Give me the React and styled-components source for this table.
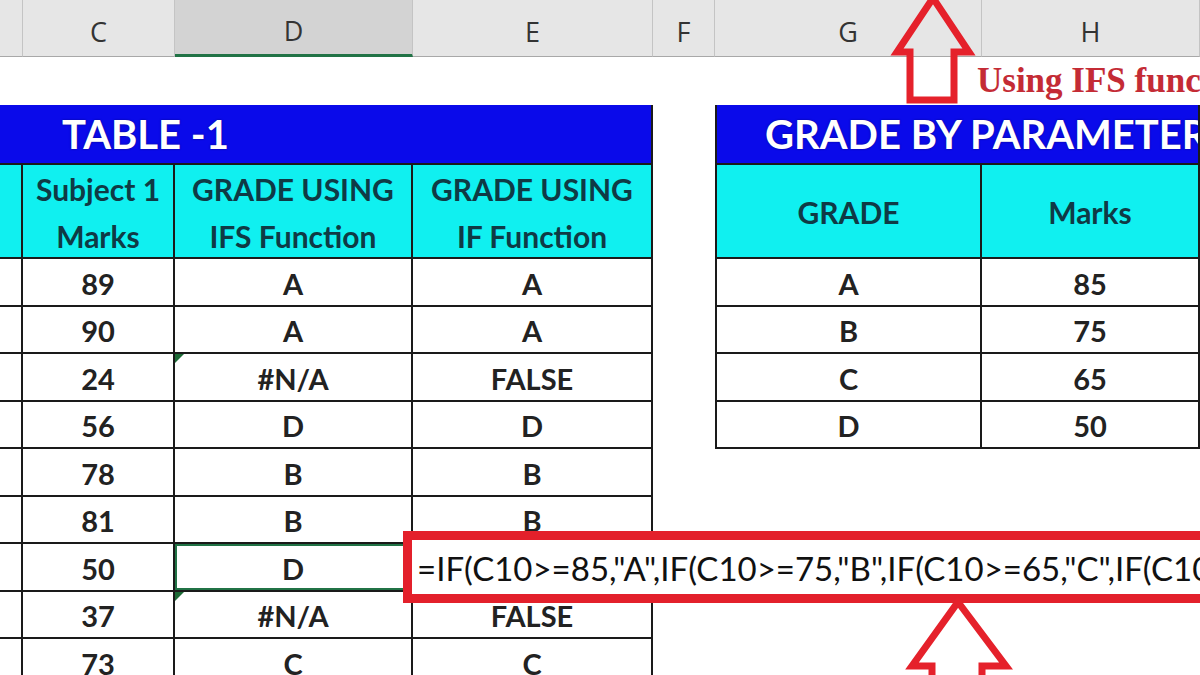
import React from 'react';
import styled, { createGlobalStyle } from 'styled-components';

const GlobalStyle = createGlobalStyle`
  body {
    margin: 0;
    background: #fff;
  }
`;

const marks = [
  { m: 89, ifs: 'A', iff: 'A' },
  { m: 90, ifs: 'A', iff: 'A' },
  { m: 24, ifs: '#N/A', iff: 'FALSE', flag: true },
  { m: 56, ifs: 'D', iff: 'D' },
  { m: 78, ifs: 'B', iff: 'B' },
  { m: 81, ifs: 'B', iff: 'B' },
  { m: 50, ifs: 'D', iff: '', selected: true },
  { m: 37, ifs: '#N/A', iff: 'FALSE', flag: true },
  { m: 73, ifs: 'C', iff: 'C' },
];

const params = [
  ['A', 85],
  ['B', 75],
  ['C', 65],
  ['D', 50],
];

const letters = ['', 'C', 'D', 'E', 'F', 'G', 'H'];

const App = () => {
  return (
    <>
      <GlobalStyle />
      <Sheet>
        {letters.map((l) => (
          <ColHeader key={l || 'b'} $active={l === 'D'}>{l}</ColHeader>
        ))}

        <Table1>
          <Title $pad={62}>TABLE -1</Title>
          <HeadCell />
          <HeadCell>Subject 1<br />Marks</HeadCell>
          <HeadCell>GRADE USING<br />IFS Function</HeadCell>
          <HeadCell>GRADE USING<br />IF Function</HeadCell>
          {marks.map((r, i) => (
            <React.Fragment key={i}>
              <Cell />
              <Cell>{r.m}</Cell>
              <Cell $flag={r.flag} $selected={r.selected}>{r.ifs}</Cell>
              <Cell>{r.iff}</Cell>
            </React.Fragment>
          ))}
        </Table1>

        <Table2>
          <Title $pad={48}>GRADE BY PARAMETERS</Title>
          <HeadCell>GRADE</HeadCell>
          <HeadCell>Marks</HeadCell>
          {params.map(([g, v]) => (
            <React.Fragment key={g}>
              <Cell>{g}</Cell>
              <Cell>{v}</Cell>
            </React.Fragment>
          ))}
        </Table2>

        <Note>Using IFS function</Note>

        <Arrow style={{ left: 890, top: -8 }} width="90" height="115" viewBox="0 0 90 115">
          <polygon points="43,6 79,60 64,60 64,108 20,108 20,60 7,60" />
        </Arrow>

        <FormulaBox>
          <Caret />
          =IF(C10&gt;=85,"A",IF(C10&gt;=75,"B",IF(C10&gt;=65,"C",IF(C10&gt;=50,"D"))))
        </FormulaBox>

        <Arrow style={{ left: 900, top: 592 }} width="120" height="90" viewBox="0 0 120 90">
          <polygon points="58,10 106,74 82,74 82,120 32,120 32,74 12,74" />
        </Arrow>
      </Sheet>
    </>
  );
};

const Sheet = styled.div`
  position: relative;
  width: 1200px;
  height: 675px;
  overflow: hidden;
  display: grid;
  grid-template-columns: 23px 152px 238px 240px 62px 267px 1fr;
  grid-template-rows: 57px 48px 1fr;
  background: #fff;
  font-family: Lato, 'Liberation Sans', sans-serif;
`;

const ColHeader = styled.div`
  display: flex;
  align-items: center;
  justify-content: center;
  box-sizing: border-box;
  background: ${(p) => (p.$active ? '#d3d3d3' : '#e6e6e6')};
  border-right: 1px solid #c4c4c4;
  border-bottom: ${(p) => (p.$active ? '3px solid #217346' : '1px solid #a8a8a8')};
  font-family: 'Open Sans', sans-serif;
  font-size: 27px;
  color: #333;
  padding-top: 6px;
`;

const Table1 = styled.div`
  grid-column: 1 / 5;
  grid-row: 3;
  display: grid;
  grid-template-columns: 23px 152px 238px 240px;
  grid-template-rows: 60px 94px;
  grid-auto-rows: 47.5px;
  align-self: start;
`;

const Table2 = styled.div`
  grid-column: 6 / 8;
  grid-row: 3;
  display: grid;
  grid-template-columns: 265px 1fr;
  grid-template-rows: 60px 94px;
  grid-auto-rows: 47.5px;
  align-self: start;
  border-left: 2px solid #1a1a1a;
`;

const Title = styled.div`
  grid-column: 1 / -1;
  display: flex;
  align-items: center;
  box-sizing: border-box;
  padding-left: ${(p) => p.$pad}px;
  background: #0a0aea;
  border-right: 2px solid #1a1a1a;
  border-bottom: 2px solid #1a1a1a;
  color: #fff;
  font-size: 40px;
  font-weight: 700;
  white-space: nowrap;
  overflow: hidden;
  text-shadow: 0 0 2px rgba(0, 0, 60, 0.6);
`;

const HeadCell = styled.div`
  display: flex;
  align-items: center;
  justify-content: center;
  text-align: center;
  box-sizing: border-box;
  padding-top: 3px;
  background: #10f0f0;
  border-right: 2px solid #1a1a1a;
  border-bottom: 2px solid #1a1a1a;
  color: #0f3a45;
  font-size: 30px;
  font-weight: 700;
  line-height: 47px;
  white-space: nowrap;
`;

const Cell = styled.div`
  position: relative;
  display: flex;
  align-items: center;
  justify-content: center;
  box-sizing: border-box;
  padding-top: 3px;
  border-right: 2px solid #1a1a1a;
  border-bottom: 2px solid #1a1a1a;
  color: #222;
  font-size: 29px;
  font-weight: 700;
  box-shadow: ${(p) => (p.$selected ? 'inset 0 0 0 2px #217346' : 'none')};

  &::before {
    content: '';
    display: ${(p) => (p.$flag ? 'block' : 'none')};
    position: absolute;
    left: 0;
    top: 0;
    border-top: 9px solid #1c6a36;
    border-right: 9px solid transparent;
  }
`;

const Note = styled.div`
  position: absolute;
  left: 977px;
  top: 61px;
  padding-right: 10px;
  background: #fff;
  color: #c42b35;
  font-family: 'Liberation Serif', serif;
  font-size: 35px;
  font-weight: 700;
  white-space: nowrap;
`;

const Arrow = styled.svg`
  position: absolute;
  overflow: visible;
  fill: none;
  stroke: #e5212b;
  stroke-width: 7;
  stroke-linejoin: miter;
`;

const FormulaBox = styled.div`
  position: absolute;
  left: 403px;
  top: 531px;
  width: 860px;
  height: 72px;
  box-sizing: border-box;
  display: flex;
  align-items: center;
  padding-left: 3px;
  padding-top: 2px;
  border: 9px solid #e3202b;
  background: #fff;
  color: #111;
  font-family: Lato, 'Liberation Sans', sans-serif;
  font-size: 33px;
  white-space: nowrap;
  overflow: hidden;
`;

const Caret = styled.span`
  display: inline-block;
  width: 2px;
  height: 32px;
  margin-right: 2px;
  background: #111;
`;

export default App;
